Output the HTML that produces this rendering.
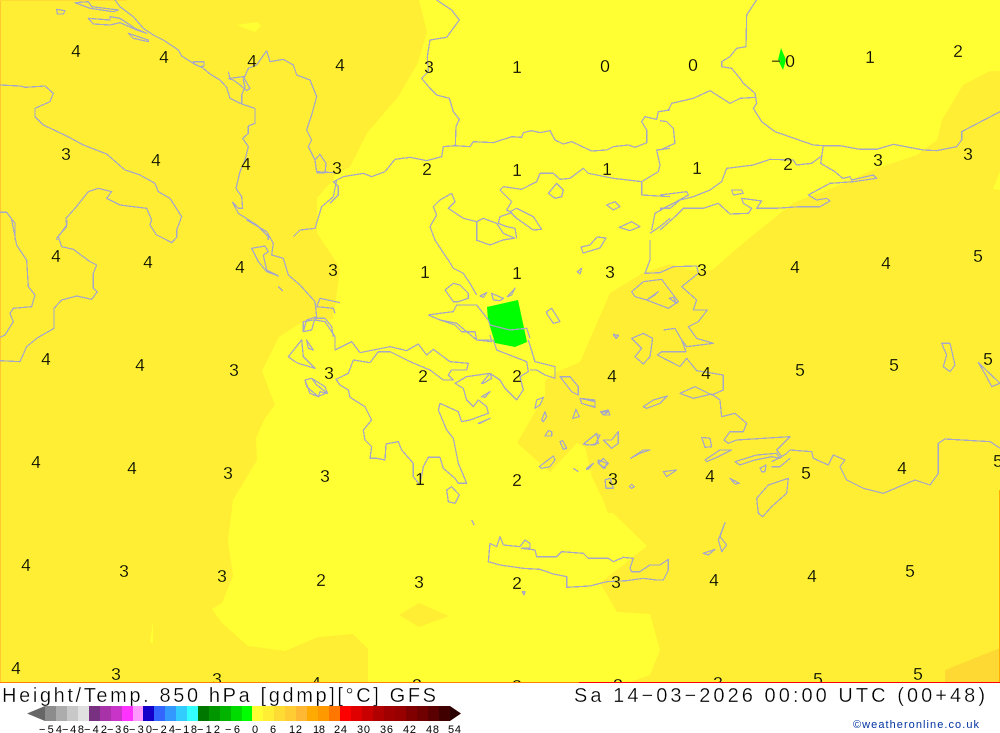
<!DOCTYPE html>
<html><head><meta charset="utf-8"><style>
html,body{margin:0;padding:0;background:#fff;width:1000px;height:733px;overflow:hidden}
svg{position:absolute;left:0;top:0;display:block}
.c path{fill:none;stroke:#a6a6c6;stroke-width:1.25;vector-effect:non-scaling-stroke;shape-rendering:crispEdges;stroke-linejoin:round}
.n text{font:17.5px "Liberation Sans",sans-serif;text-anchor:middle;fill:#000;stroke:#ffff33;stroke-width:.22}
.t{font-family:"Liberation Sans",sans-serif;fill:#000;stroke:#fff;stroke-width:.3}
.l text{font:11px "Liberation Sans",sans-serif;fill:#000;text-anchor:start}
</style></head><body>
<svg width="1000" height="733" viewBox="0 0 1000 733" xmlns="http://www.w3.org/2000/svg">
<defs><clipPath id="m"><rect width="1000" height="682"/></clipPath></defs>
<rect width="1000" height="733" fill="#fff"/>
<g clip-path="url(#m)">
<rect width="1000" height="683" fill="#ffff33"/>
<polygon fill="#ffee33" points="0,0 419,0 427,32 418,63 398,97 367,133 350,167 335,175 333,180 317,198 317,233 337,263 340,270 333,319 302,322 279,337 262,371 275,405 265,418 256,438 257,460 233,500 228,540 233,576 222,603 212,609 222,623 248,646 285,651 318,637 353,634 368,649 368,683 0,683"/>
<polygon fill="#ffff33" points="237,25 257,22 261,26 255,32"/>
<polygon fill="#ffff33" points="153,621 150,642 153,643"/>
<polygon fill="#ffee33" points="399,615 419,603 449,616 419,627"/>
<polygon fill="#ffee33" points="1000,71 990,71 963,85 942,120 937,140 933,143 917,155 877,168 840,185 793,203 747,240 712,270 690,270 670,264 643,273 610,293 580,362 557,372 545,380 545,395 517,443 550,472 577,443 585,447 592,477 603,500 608,513 613,513 647,546 600,583 617,612 650,614 660,650 650,675 627,683 1000,683"/>
<polygon fill="#ffff33" points="993,189 1000,172 1000,190"/>
<polygon fill="#ffd933" points="945,670 1000,648 1000,683 945,683"/>
<rect x="0" y="0" width="1" height="683" fill="#ffc833"/>
<rect x="0" y="0" width="127" height="1" fill="#ffdc33"/>
<rect x="999" y="490" width="1" height="193" fill="#ffaa00"/>
<polygon fill="#00ff00" points="487,307 518,300 527,342 515,347 495,343 488,320"/>
<polygon fill="#00ff00" points="781,48 786,60 783,70 778,60"/>
<g class="c">
<path d="M435,240L448,260 M476,240L490,245 503,240 515,238 M581,247L590,245 597,237 606,238 600,248 590,251 583,253Z"/>
<g transform="scale(.33333)">
<path d="M345,0L360,20 400,50 430,85 460,105 490,120 535,150 545,168 580,190 610,205 630,222 660,240 680,262 690,295 725,312 765,325 765,370 745,378 745,400 728,415 745,440 735,480 720,515 708,565 725,590 728,625 715,625 698,607 715,640 770,675 805,710 805,720"/>
<path d="M225,8L265,5 275,20 355,30 340,35 270,25Z"/>
<path d="M170,28L195,32 190,42 172,42Z"/>
<path d="M265,55L330,60 330,50 360,55 405,85 440,100 410,90 360,68 330,75 280,72Z"/>
<path d="M385,100L445,120 445,125 400,115Z"/>
<path d="M580,185L612,185 612,198 600,200 582,192Z"/>
<path d="M685,215L690,235 730,230 750,265 740,272 720,255 700,240 685,235"/>
<path d="M0,255L60,258 75,262 135,258 160,280 150,305 105,325 105,350 130,375 200,408 250,435 320,462 375,510 420,525 465,550 475,575 510,595 545,650 530,690 530,712 515,728 500,720 470,705 450,675 455,660 440,625 360,615 320,595 335,575 295,565 265,575 225,625 198,655 200,680 172,712 170,720"/>
<path d="M0,637L20,637 45,670 45,720"/>
<path d="M800,152L770,195 745,205 730,240 735,260 725,285 725,312"/>
<path d="M800,152L810,185 850,178 880,195 890,225 930,240 950,290 935,345 920,390 935,420 925,440 945,480 950,515 1000,518"/>
<path d="M945,480L960,463 978,490 975,518 950,518"/>
<path d="M880,710L900,690 945,685 965,620 1000,590 1010,540"/>
</g>
<g transform="translate(0,220) scale(.33333)">
<path d="M200,0L200,15 175,50 185,80 220,88 270,125 290,135 280,160 280,205 292,215 275,238 230,228 185,240 162,265 162,325 110,355 80,380 60,425 0,422"/>
<path d="M35,0L50,75 80,120 85,200 105,225 95,260 40,265 30,280 40,305 15,345 0,352"/>
<path d="M740,0L800,35 820,70 815,105 850,115 865,165 900,195 945,245 950,290 920,300 910,335 935,330 945,295 975,295 995,320 1000,350"/>
<path d="M755,85L795,78 805,95 790,105 800,150 835,168 800,155 775,125Z"/>
<path d="M835,200L848,213"/>
<path d="M950,260L960,235 1020,248 M950,260L1000,265 1005,280"/>
<path d="M915,480L935,475 975,500 982,520 960,515 955,530 930,520Z"/>
</g>
<g transform="translate(330,0) scale(.33333)">
<path d="M0,610L25,585 25,560 10,545 40,530 100,520 125,530 165,515 195,478 240,472 290,482 335,470 340,440 375,437 420,440 430,425 490,428 545,410 575,412 580,398 605,392 630,398 660,392 675,420 700,432 725,425 785,453 830,450 850,440 895,435 915,442 950,428 950,390 935,365 945,350 980,358 985,335 1020,330"/>
<path d="M320,0L365,30 388,60 350,112 300,120 292,170 295,215 275,235 300,265 320,285 358,295 370,335 388,358 378,380 376,437"/>
<path d="M520,560L575,568 620,545 630,520 670,520 690,538 720,535 760,505 775,520 850,535 935,545 935,585 1020,590"/>
<path d="M935,545L985,515 990,495 980,450 1020,445"/>
<path d="M520,560L510,570 545,605 530,630 545,638 510,650 505,670 530,680 555,685 560,715"/>
<path d="M540,635L560,625 610,650 635,688 610,690 560,655Z"/>
<path d="M365,580L375,605 355,625 400,655 440,665 440,720"/>
<path d="M365,580L330,600 310,620 320,645 300,680 315,720"/>
<path d="M440,665L460,655 500,670 520,700 555,715"/>
<path d="M680,550L700,570 695,590 675,595 655,580Z"/>
<path d="M830,615L855,605 870,620 850,630Z"/>
<path d="M868,682L905,665 930,680 900,692Z"/>
<path d="M1020,615L975,640 965,690 M1020,655L990,680 960,700"/>
</g>
<g transform="translate(660,0) scale(.33333)">
<path d="M290,0L280,15 260,45 258,140 230,145 210,170 185,185 185,200 215,205 240,235 250,250 285,280 290,310 280,325 305,365 345,395 460,435 490,437 540,437 600,448 650,448 700,433 790,450 830,452 890,440 905,420 905,395 1020,335"/>
<path d="M0,335L25,330 35,310 100,295 150,272 210,310 240,295 285,292"/>
<path d="M490,437L482,490 525,515 548,535 570,530 575,540 640,525 650,535 580,545 510,550 445,585 470,600 500,595 510,603 480,620 420,620 345,625 290,625 305,603 245,595 250,610 275,625 265,640 210,642 175,610 130,625 70,625 45,650 0,690"/>
<path d="M200,505L280,495 330,478 400,480 410,495 455,490 482,470"/>
<path d="M200,505L185,545 150,570 100,590 60,600 30,625 0,625"/>
<path d="M0,362L20,365 40,385 45,430 0,450"/>
<path d="M0,585L80,575 85,585 40,610 0,630"/>
<path d="M215,570L245,570 250,580 220,585Z"/>
</g>
<g transform="translate(420,260) scale(.33333)">
<path d="M85,0L100,25 130,40 150,70 170,105"/>
<path d="M75,90L100,70 120,75 145,100 145,115 115,125 100,125Z"/>
<path d="M180,108L200,98 190,112Z"/>
<path d="M215,100L250,115 240,122 220,120Z"/>
<path d="M262,110L285,85 275,105Z"/>
<path d="M25,165L60,160 100,155 110,135 170,135 205,180 210,195 270,210 320,205 330,235"/>
<path d="M25,165L60,180 105,195 125,215 165,215 170,240 215,245 210,225"/>
<path d="M380,155L395,145 420,185 400,190 380,160Z"/>
<path d="M472,35L485,25 480,42Z"/>
<path d="M580,225L595,225 590,235Z"/>
</g>
<g transform="translate(270,320) scale(.33333)">
<path d="M510,0L560,10 620,60 670,60"/>
<path d="M195,90L245,65 270,98 320,88 360,80 410,92 445,72 470,105 490,88 540,125 595,130 590,150 545,150 535,165 550,180 520,180 480,150 420,125 360,95 325,95 300,128 250,120 235,160 198,178 210,195 235,210 240,232 285,260 305,300 280,330 285,360 305,380 300,415 320,415 345,420 348,372 385,365 395,390 430,430 430,470 450,495 460,440 475,412 510,412 520,445 555,475 565,490 590,490 565,430 550,355 530,330 505,270 510,250 565,275 575,305 600,300 655,280 650,260 625,240 610,260 590,240 580,205 555,190 590,170 660,160 690,180 705,205 740,240 760,210 750,170 775,155 770,125 680,90 670,60"/>
<path d="M135,0L165,5 195,50 195,90"/>
<path d="M100,35L100,5 130,0"/>
<path d="M775,60L795,125 855,140 855,175 825,165 800,150 780,150"/>
<path d="M55,110L75,85 95,60 100,110 135,145 85,130 75,125Z"/>
<path d="M110,60L130,90 115,85Z"/>
<path d="M105,180L125,175 140,195 170,218 145,230 110,200Z"/>
<path d="M530,510L545,500 568,525 555,550 535,545Z"/>
<path d="M870,170L900,170 925,200 925,225 905,215Z"/>
<path d="M930,235L975,240 975,262 935,250Z"/>
<path d="M795,265L800,240 820,232 810,255Z"/>
<path d="M815,300L825,275 830,290 820,305Z"/>
<path d="M825,348L835,332 845,335 845,348Z"/>
<path d="M870,365L878,362 890,385 880,388Z"/>
<path d="M908,295L918,268 928,290Z"/>
<path d="M940,372L975,345 990,345 975,375 950,375Z"/>
<path d="M808,440L850,408 855,420 840,440 815,445Z"/>
<path d="M985,430L1000,415 1015,430 1000,445Z"/>
<path d="M950,445L970,430 955,448Z"/>
<path d="M910,445L925,455"/>
<path d="M995,275L1015,270 1020,285 1000,285Z"/>
<path d="M635,190L660,160 665,175 640,190Z"/>
<path d="M635,230L660,215 645,232Z"/>
<path d="M625,310L660,295 630,310Z"/>
<path d="M605,600L613,615"/>
</g>
<g transform="translate(460,500) scale(.33333)">
<path d="M85,185L90,130 110,140 120,110 130,135 180,140 195,120 210,130 210,145 185,145 225,150 230,170 290,170 305,155 370,160 385,175 445,175 460,185 490,172 520,175 510,205 515,215 540,215 570,195 600,195 625,178 625,210 610,240 590,240 550,235 500,242 440,245 390,258 320,262 320,230 280,222 240,208 190,205 120,195Z"/>
<path d="M187,275L195,275 192,285Z"/>
<path d="M795,68L780,110 800,135 785,155 775,120Z"/>
<path d="M730,160L765,148 745,165Z"/>
</g>
<g transform="translate(580,240) scale(.33333)">
<path d="M210,0L210,60 195,100 240,98 280,80 350,78 355,100 305,140 350,180 340,210 382,210 355,245 325,260 350,295 400,310 320,320 305,300"/>
<path d="M155,155L190,125 245,118 295,185 265,205 200,180 165,170Z"/>
<path d="M200,180L235,155 225,165Z"/>
<path d="M268,175L280,172 290,190Z"/>
<path d="M155,295L190,280 218,295 210,350 190,372 165,350 185,325Z"/>
<path d="M100,282L115,288 108,295Z"/>
<path d="M250,270L285,265 305,300 318,335 280,335 245,335 232,345 300,380 320,355 350,392 430,405 430,450 395,465 345,440 300,460 340,475 395,462 420,480 425,530 465,520 500,550 490,575 450,575 432,600 445,610 470,600 630,590 590,630 605,650"/>
<path d="M630,630L695,635 700,655 745,675 760,645 795,660 780,680 800,720 850,745 910,760 1005,720 1050,735 1075,700 1075,610 1095,597 1230,605 1260,625"/>
<path d="M625,715L620,760 575,800 548,830 535,820 530,775 565,735Z"/>
<path d="M465,665L530,645 590,640 600,655 575,650 525,660 480,675Z"/>
<path d="M575,665L605,650 620,640 630,630 M575,680L600,680 630,655"/>
<path d="M540,685L558,675 555,695 545,695Z"/>
<path d="M375,660L420,630 455,630 415,650 380,665Z"/>
<path d="M365,592L390,595 395,620 375,622Z"/>
<path d="M250,695L290,690 260,710Z"/>
<path d="M450,715L478,730 465,732Z"/>
<path d="M148,740L155,733 163,740 155,745Z"/>
<path d="M152,655L190,630 210,630 180,640Z"/>
<path d="M190,500L220,480 262,468 240,490 200,505Z"/>
<path d="M62,515L85,515 70,525Z"/>
<path d="M0,475L45,485 45,500 20,495"/>
<path d="M95,600L115,575 115,610 95,625 70,600Z"/>
<path d="M10,612L50,580 55,610 30,615Z"/>
<path d="M55,660L80,670 75,685 55,670Z"/>
<path d="M20,685L40,670 20,688Z"/>
<path d="M75,720L90,715 100,745 78,745Z"/>
<path d="M1085,310L1110,310 1125,375 1110,395 1090,380 1100,345Z"/>
<path d="M1195,368L1260,430 1235,440 1220,410Z"/>
</g>
</g>
<g class="n">
<text x="76" y="57">4</text><text x="164" y="63">4</text><text x="252" y="67">4</text><text x="340" y="71">4</text><text x="429" y="73">3</text><text x="517" y="73">1</text><text x="605" y="72">0</text><text x="693" y="71">0</text><text x="782" y="67" style="text-anchor:start" transform="translate(-11,0)" textLength="24" lengthAdjust="spacing">−0</text><text x="870" y="63">1</text><text x="958" y="57">2</text>
<text x="66" y="160">3</text><text x="156" y="166">4</text><text x="246" y="170">4</text><text x="337" y="174">3</text><text x="427" y="175">2</text><text x="517" y="176">1</text><text x="607" y="175">1</text><text x="697" y="174">1</text><text x="788" y="170">2</text><text x="878" y="166">3</text><text x="968" y="160">3</text>
<text x="56" y="262">4</text><text x="148" y="268">4</text><text x="240" y="273">4</text><text x="333" y="276">3</text><text x="425" y="278">1</text><text x="517" y="279">1</text><text x="610" y="278">3</text><text x="702" y="276">3</text><text x="795" y="273">4</text><text x="886" y="269">4</text><text x="978" y="262">5</text>
<text x="46" y="365">4</text><text x="140" y="371">4</text><text x="234" y="376">3</text><text x="329" y="379">3</text><text x="423" y="382">2</text><text x="517" y="382">2</text><text x="612" y="382">4</text><text x="706" y="379">4</text><text x="800" y="376">5</text><text x="894" y="371">5</text><text x="988" y="365">5</text>
<text x="36" y="468">4</text><text x="132" y="474">4</text><text x="228" y="479">3</text><text x="325" y="482">3</text><text x="420" y="485">1</text><text x="517" y="486">2</text><text x="613" y="485">3</text><text x="710" y="482">4</text><text x="806" y="479">5</text><text x="902" y="474">4</text><text x="998" y="467">5</text>
<text x="26" y="571">4</text><text x="124" y="577">3</text><text x="222" y="582">3</text><text x="321" y="586">2</text><text x="419" y="588">3</text><text x="517" y="589">2</text><text x="616" y="588">3</text><text x="714" y="586">4</text><text x="812" y="582">4</text><text x="910" y="577">5</text>
<text x="16" y="674">4</text><text x="116" y="680">3</text><text x="217" y="685">3</text><text x="316" y="689">4</text><text x="417" y="691">3</text><text x="517" y="692">3</text><text x="618" y="691">3</text><text x="718" y="689">3</text><text x="818" y="685">5</text><text x="918" y="680">5</text>
</g>
</g>
<rect x="0" y="682" width="579" height="1" fill="#ff8000"/>
<rect x="579" y="682" width="421" height="1" fill="#ff0000"/>
<text class="t" x="2" y="702" font-size="20" textLength="434" lengthAdjust="spacing">Height/Temp. 850 hPa [gdmp][°C] GFS</text>
<text class="t" x="574" y="702" font-size="20" textLength="411" lengthAdjust="spacing">Sa 14−03−2026 00:00 UTC (00+48)</text>
<text x="853" y="728" font-family="'Liberation Sans',sans-serif" font-size="11" fill="#0033a0" textLength="126" lengthAdjust="spacing">©weatheronline.co.uk</text>
<g shape-rendering="crispEdges">
<rect x="45" y="706" width="11" height="15" fill="#8c8c8c"/><rect x="56" y="706" width="11" height="15" fill="#acacac"/><rect x="67" y="706" width="11" height="15" fill="#c8c8c8"/><rect x="78" y="706" width="11" height="15" fill="#e0e0e0"/>
<rect x="89" y="706" width="11" height="15" fill="#783080"/><rect x="100" y="706" width="11" height="15" fill="#a833a8"/><rect x="111" y="706" width="11" height="15" fill="#c833c8"/><rect x="122" y="706" width="11" height="15" fill="#ff33ff"/><rect x="133" y="706" width="10" height="15" fill="#ff99ff"/>
<rect x="143" y="706" width="11" height="15" fill="#1400c8"/><rect x="154" y="706" width="11" height="15" fill="#3366ff"/><rect x="165" y="706" width="11" height="15" fill="#3399ff"/><rect x="176" y="706" width="11" height="15" fill="#33ccff"/><rect x="187" y="706" width="11" height="15" fill="#33ffff"/>
<rect x="198" y="706" width="11" height="15" fill="#007800"/><rect x="209" y="706" width="11" height="15" fill="#009600"/><rect x="220" y="706" width="11" height="15" fill="#00b400"/><rect x="231" y="706" width="11" height="15" fill="#00dc00"/><rect x="242" y="706" width="10" height="15" fill="#00ff00"/>
<rect x="252" y="706" width="11" height="15" fill="#ffff33"/><rect x="263" y="706" width="11" height="15" fill="#ffee33"/><rect x="274" y="706" width="11" height="15" fill="#ffdc33"/><rect x="285" y="706" width="11" height="15" fill="#ffcc33"/><rect x="296" y="706" width="11" height="15" fill="#ffb833"/><rect x="307" y="706" width="11" height="15" fill="#ffaa00"/><rect x="318" y="706" width="11" height="15" fill="#ff9900"/><rect x="329" y="706" width="11" height="15" fill="#ff7700"/>
<rect x="340" y="706" width="11" height="15" fill="#ff0000"/><rect x="351" y="706" width="11" height="15" fill="#e00000"/><rect x="362" y="706" width="11" height="15" fill="#c80000"/><rect x="373" y="706" width="11" height="15" fill="#b00000"/><rect x="384" y="706" width="11" height="15" fill="#a00000"/><rect x="395" y="706" width="11" height="15" fill="#980000"/><rect x="406" y="706" width="11" height="15" fill="#800000"/><rect x="417" y="706" width="11" height="15" fill="#700000"/><rect x="428" y="706" width="11" height="15" fill="#5a0000"/><rect x="439" y="706" width="11" height="15" fill="#400000"/>
</g>
<polygon points="27,713.5 45,706 45,721" fill="#666"/>
<polygon points="450,706 461,713.5 450,721" fill="#2a0000"/>
<g class="l">
<text x="39" y="733" textLength="23" lengthAdjust="spacing">−54</text><text x="62" y="733" textLength="22" lengthAdjust="spacing">−48</text><text x="84" y="733" textLength="23" lengthAdjust="spacing">−42</text><text x="107" y="733" textLength="22" lengthAdjust="spacing">−36</text><text x="129" y="733" textLength="23" lengthAdjust="spacing">−30</text><text x="152" y="733" textLength="23" lengthAdjust="spacing">−24</text><text x="175" y="733" textLength="22" lengthAdjust="spacing">−18</text><text x="197" y="733" textLength="23" lengthAdjust="spacing">−12</text><text x="225" y="733" textLength="15" lengthAdjust="spacing">−6</text>
<text x="252" y="733">0</text><text x="270" y="733">6</text><text x="289" y="733" textLength="13" lengthAdjust="spacing">12</text><text x="313" y="733" textLength="12" lengthAdjust="spacing">18</text><text x="334" y="733" textLength="13" lengthAdjust="spacing">24</text><text x="357" y="733" textLength="13" lengthAdjust="spacing">30</text><text x="380" y="733" textLength="13" lengthAdjust="spacing">36</text><text x="403" y="733" textLength="13" lengthAdjust="spacing">42</text><text x="426" y="733" textLength="13" lengthAdjust="spacing">48</text><text x="448" y="733" textLength="13" lengthAdjust="spacing">54</text>
</g>
</svg>
</body></html>
